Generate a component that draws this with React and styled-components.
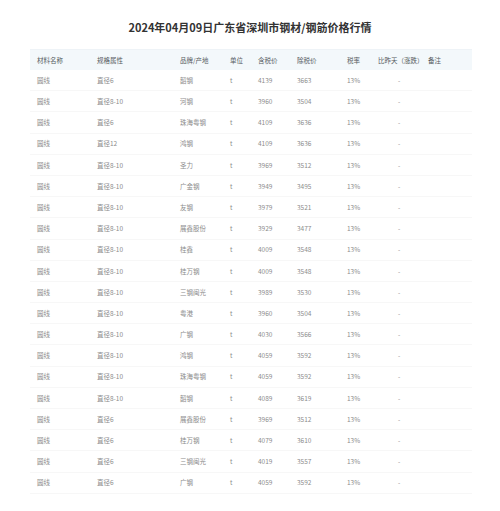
import React from 'react'
import styled, { createGlobalStyle } from 'styled-components'

const GlobalStyle = createGlobalStyle`
  body {
    margin: 0;
    background: #ffffff;
    font-family: "Noto Sans CJK SC", "Noto Sans", sans-serif;
  }
`

const COLS = '60px 83px 50px 28px 39px 50px 31px 50px 1fr'

const headers = ['材料名称', '规格属性', '品牌/产地', '单位', '含税价', '除税价', '税率', '比昨天（涨跌）', '备注']

const rows = [
  ['直径6', '韶钢', '4139', '3663'],
  ['直径8-10', '河钢', '3960', '3504'],
  ['直径6', '珠海粤钢', '4109', '3636'],
  ['直径12', '鸿钢', '4109', '3636'],
  ['直径8-10', '圣力', '3969', '3512'],
  ['直径8-10', '广金钢', '3949', '3495'],
  ['直径8-10', '友钢', '3979', '3521'],
  ['直径8-10', '展鑫股份', '3929', '3477'],
  ['直径8-10', '桂鑫', '4009', '3548'],
  ['直径8-10', '桂万钢', '4009', '3548'],
  ['直径8-10', '三钢闽光', '3989', '3530'],
  ['直径8-10', '粤港', '3960', '3504'],
  ['直径8-10', '广钢', '4030', '3566'],
  ['直径8-10', '鸿钢', '4059', '3592'],
  ['直径8-10', '珠海粤钢', '4059', '3592'],
  ['直径8-10', '韶钢', '4089', '3619'],
  ['直径6', '展鑫股份', '3969', '3512'],
  ['直径6', '桂万钢', '4079', '3610'],
  ['直径6', '三钢闽光', '4019', '3557'],
  ['直径6', '广钢', '4059', '3592'],
]

const App = () => {
  return (
    <Page>
      <GlobalStyle />
      <Title>2024年04月09日广东省深圳市钢材/钢筋价格行情</Title>
      <Table>
        <HeadRow>
          {headers.map((h) => (
            <Cell key={h}>{h}</Cell>
          ))}
        </HeadRow>
        {rows.map((r, i) => (
          <Row key={i}>
            <Cell>圆线</Cell>
            <Cell>{r[0]}</Cell>
            <Cell>{r[1]}</Cell>
            <Cell>t</Cell>
            <Cell>{r[2]}</Cell>
            <Cell>{r[3]}</Cell>
            <Cell>13%</Cell>
            <Cell $center>-</Cell>
            <Cell></Cell>
          </Row>
        ))}
      </Table>
    </Page>
  )
}

export default App

const Page = styled.div`
  width: 500px;
  height: 511px;
  padding-top: 17px;
  box-sizing: border-box;
  overflow: hidden;
`

const Title = styled.h1`
  margin: 0;
  text-align: center;
  font-size: 11px;
  line-height: 20px;
  font-weight: 700;
  color: #333333;
`

const Table = styled.div`
  margin: 12px 28px 0 30px;
`

const HeadRow = styled.div`
  display: grid;
  grid-template-columns: ${COLS};
  align-items: center;
  height: 20px;
  padding-left: 7px;
  background: #f3f8fb;
  border-top: 1px solid #eef3f7;
  color: #555a60;
`

const Row = styled.div`
  display: grid;
  grid-template-columns: ${COLS};
  align-items: center;
  height: 21.2px;
  padding-left: 7px;
  border-bottom: 1px solid #f7f7f7;
  box-sizing: border-box;
  color: #8c8c8c;
`

const Cell = styled.div`
  font-size: 6.5px;
  line-height: 1;
  white-space: nowrap;
  padding-left: ${(p) => (p.$center ? '20px' : '0')};
`
